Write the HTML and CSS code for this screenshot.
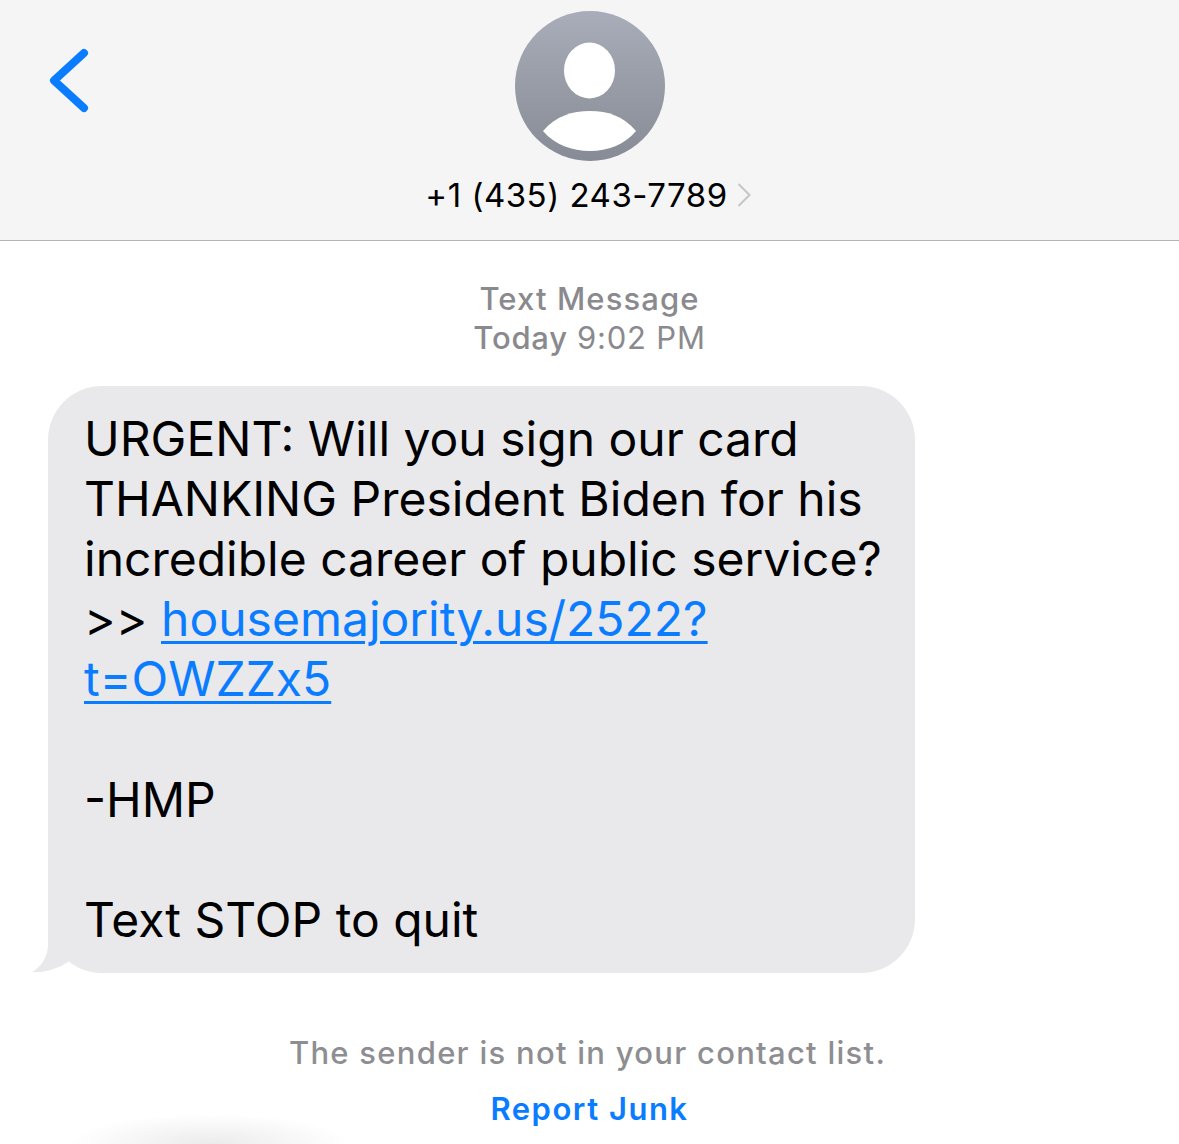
FILE: index.html
```html
<!DOCTYPE html>
<html lang="en">
<head>
  <meta charset="UTF-8" />
  <title>Text Message</title>
  <link rel="stylesheet" href="styles.css">
</head>
<body>

  <div class="header">
    <svg class="back" width="44" height="68" viewBox="0 0 44 68">
      <path d="M36 5 L6 32.5 L36 60" />
    </svg>
    <svg class="avatar" width="150" height="150" viewBox="0 0 150 150">
      <defs>
        <linearGradient id="avatarBg" x1="0" y1="0" x2="0" y2="1">
          <stop offset="0" stop-color="#a8adb9" />
          <stop offset="1" stop-color="#878b95" />
        </linearGradient>
      </defs>
      <circle cx="75" cy="75" r="75" fill="url(#avatarBg)" />
      <ellipse cx="74.5" cy="59.5" rx="25.5" ry="28" fill="#fff" />
      <path d="M28 120 C41 105 57 100 75 100 C93 100 108 105 121 120 C109 134 93 140 75 140 C57 140 40 134 28 120 Z" fill="#fff" />
    </svg>
    <div class="contact">
      <span class="number">+1 (435) 243-7789</span>
      <svg class="chevron" width="14" height="24" viewBox="0 0 14 24">
        <path d="M1.5 1 L12.5 12 L1.5 23" />
      </svg>
    </div>
  </div>

  <div class="thread">
    <div class="timestamp">
      <div class="service">Text Message</div>
      <div class="when">Today <span class="time">9:02 PM</span></div>
    </div>

    <div class="bubble">
      URGENT: Will you sign our card<br>
      THANKING President Biden for his<br>
      incredible career of public service?<br>
      &gt;&gt; <a class="link" href="#">housemajority.us/2522?<br>t=OWZZx5</a><br>
      <br>
      -HMP<br>
      <br>
      Text STOP to quit
      <svg class="tail" width="44" height="60" viewBox="0 0 44 60">
        <path d="M16 0 L16 32 C16 42 10 54 0 59 C14 60 27 55 36 49 L44 30 Z" />
      </svg>
    </div>

    <div class="notice">The sender is not in your contact list.</div>
    <a class="report" href="#">Report Junk</a>
  </div>

  <div class="fade"></div>

</body>
</html>
```

FILE: styles.css
```css
* {
  box-sizing: border-box;
  font-family: Inter, 'Liberation Sans', sans-serif;
}

html, body {
  height: 100%;
}

body {
  margin: 0;
  padding: 0;
  background: #fff;
  overflow: hidden;
  position: relative;
}

.header {
  height: 241px;
  background: #f5f5f6;
  border-bottom: 1px solid #b4b4b6;
  padding-top: 11px;
  display: flex;
  flex-direction: column;
  align-items: center;
  position: relative;
}

.back {
  position: absolute;
  left: 48px;
  top: 48px;
  fill: none;
  stroke: #0a7cff;
  stroke-width: 8;
  stroke-linecap: round;
  stroke-linejoin: round;
}

.contact {
  margin-top: 14px;
  padding-right: 3px;
  display: flex;
  align-items: center;
  gap: 9px;
}

.number {
  font-size: 33px;
  line-height: 40px;
  color: #000;
  letter-spacing: 0.5px;
}

.chevron {
  fill: none;
  stroke: #c5c5c7;
  stroke-width: 2;
}

.thread {
  padding: 38px 0 0;
  display: flex;
  flex-direction: column;
  align-items: center;
}

.timestamp {
  font-size: 31px;
  line-height: 39px;
  font-weight: 500;
  color: #8a8a8e;
  text-align: center;
}

.service {
  letter-spacing: 1.1px;
}

.when {
  letter-spacing: 0.8px;
}

.time {
  font-weight: 400;
}

.bubble {
  align-self: flex-start;
  position: relative;
  width: 867px;
  height: 587px;
  margin: 29px 0 0 48px;
  padding: 23px 0 0 36px;
  background: #e9e9eb;
  border-radius: 54px;
  font-size: 48px;
  line-height: 60.1px;
  color: #000;
  white-space: nowrap;
}

.link {
  color: #0a7cff;
  text-decoration: underline;
  text-underline-offset: 5px;
  text-decoration-thickness: 3px;
}

.tail {
  position: absolute;
  left: -16px;
  bottom: 0;
  fill: #e9e9eb;
}

.notice {
  margin-top: 60px;
  padding-right: 4px;
  font-size: 31px;
  line-height: 40px;
  font-weight: 500;
  color: #8e8e92;
  letter-spacing: 1.27px;
}

.report {
  margin-top: 16px;
  font-size: 31px;
  line-height: 40px;
  font-weight: 600;
  color: #0a7cff;
  text-decoration: none;
  letter-spacing: 1.5px;
}

.fade {
  position: absolute;
  left: 70px;
  bottom: -30px;
  width: 280px;
  height: 60px;
  background: radial-gradient(closest-side, #ebebeb, rgba(255, 255, 255, 0));
}
```
